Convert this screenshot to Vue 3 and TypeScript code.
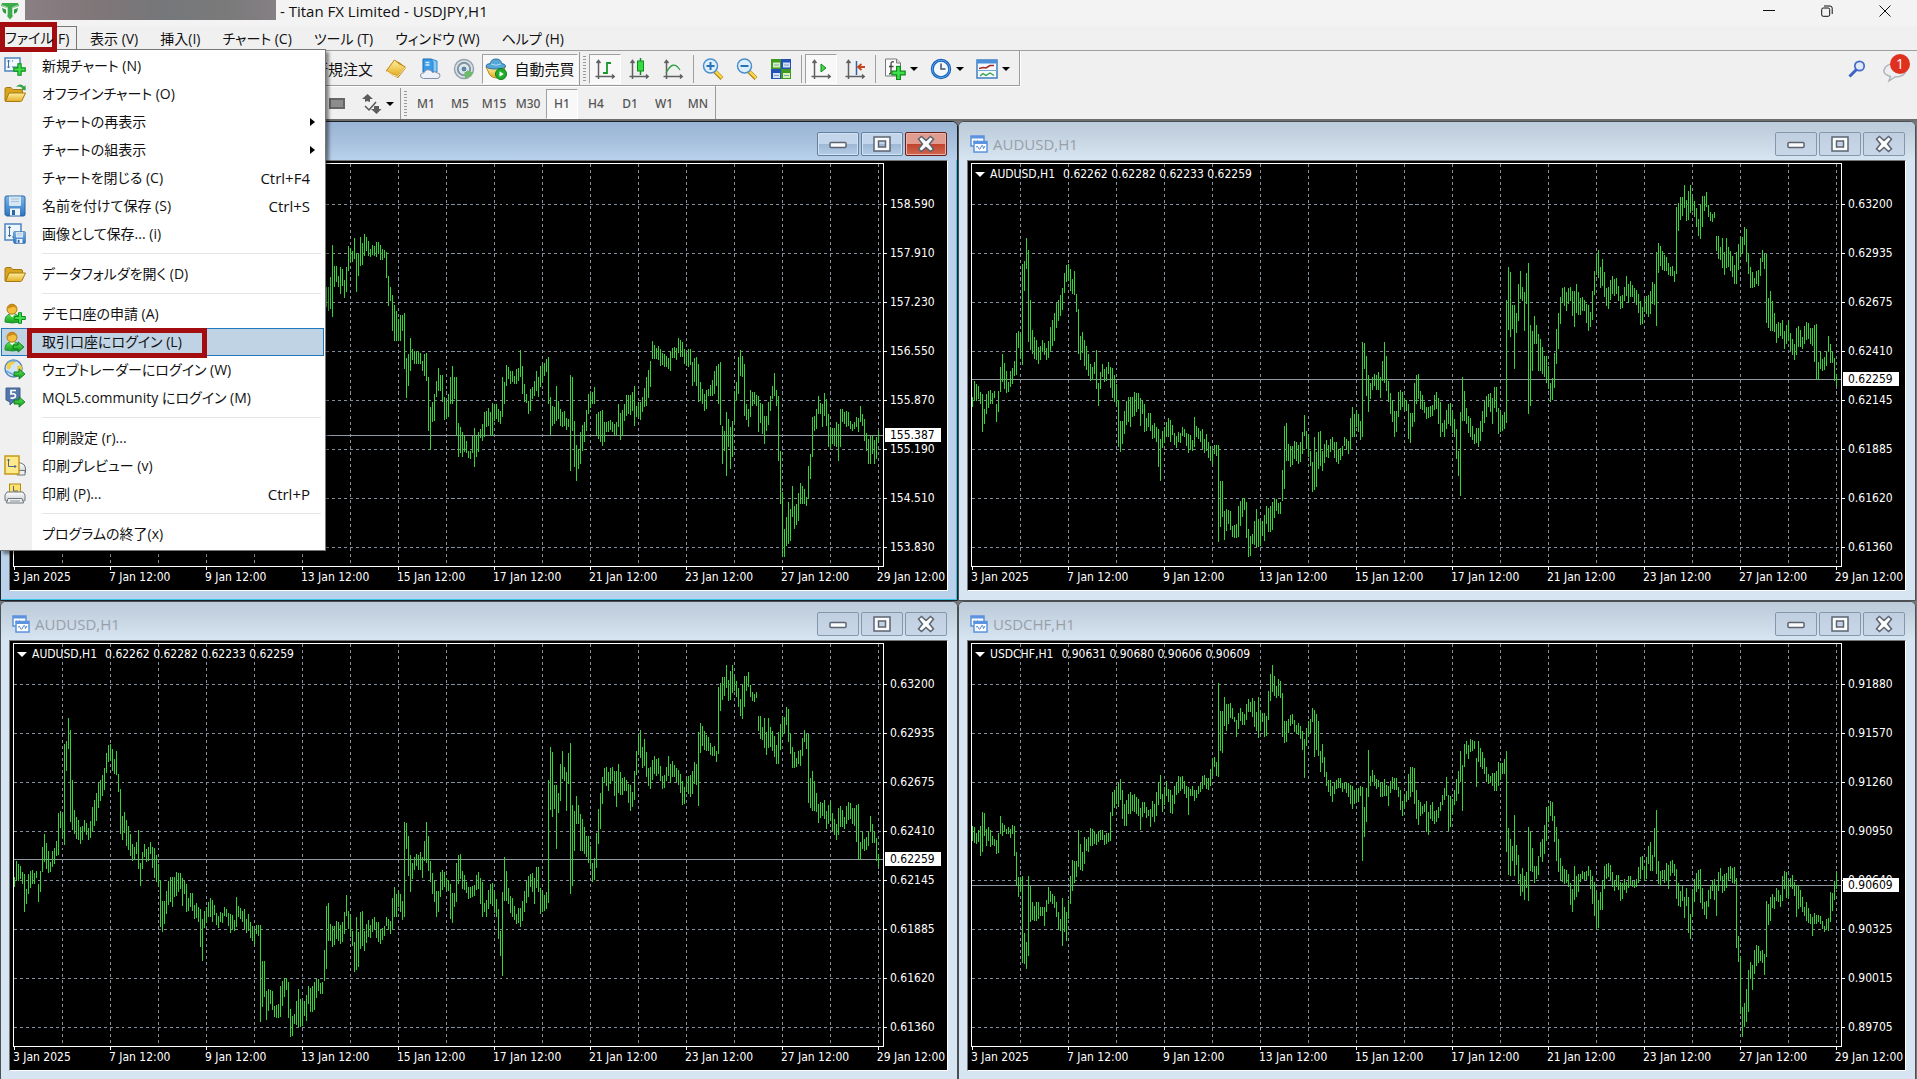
<script setup lang="ts">
interface Bar { x: number; hi: number; lo: number }
interface ChartWin {
  id: string
  title: string
  prices?: string
  labels: string[]
  bars: string
  level: number
  last: string
  active?: boolean
}
interface MenuEntry { label?: string; key?: string; icon?: string; sub?: boolean; hot?: boolean }

const TOP_ROW = 130
const LOWER_ROW = 145

/* Sampled highs and lows: "position high low", three steps to a pixel. */
const audFirst = '52 828 858,58 780 840,70 795 835,78 815 850,83 820 935,89 865 910,95 820 880,107 808 850,119 810 832,125 850 905,131 812 875,137 738 815,143 700 785,155 750 818,161 785 815,167 750 800,179 720 765,185 637 762,191 630 682,197 640 715,203 430 732,209 420 510,215 352 445,221 388 665,227 538 688,233 628 700,239 650 715,251 680 730,263 657 693,275 683 717,287 620 690,299 577 660,311 537 600,323 503 567,329 457 518,335 434 485,341 430 480,347 445 510,353 475 520,359 450 522,365 520 575,371 565 700,377 645 717,383 633 697,389 657 735,401 700 767,413 740 777,419 725 760,425 687 805,431 787 857,437 753 805,443 730 770,455 740 782,461 723 760,473 743 832,485 790 860,491 838 980,497 900 995,503 900 970,509 870 940,521 828 905,527 828 920,533 828 890,539 813 885,551 818 865,557 832 917,563 840 880,569 850 935,575 892 930,581 877 918,587 877 930,593 913 955,605 918 965,611 925 1038,617 955 1082,623 930 983,635 905 950,647 897 965,653 913 942,665 945 983,671 935 965,689 925 950,701 940 997,713 958 990,719 888 980,725 917 948,737 930 965,743 925 985,749 955 997,755 940 990,767 975 1020,773 988 1033,779 972 1000,785 972 1006,791 973 1265,797 1080 1220,803 1080 1188,809 1170 1257,821 1167 1210,827 1170 1228,833 1217 1250,845 1210 1252,851 1155 1250,863 1132 1190,869 1132 1167,875 1145 1252,881 1225 1310,887 1247 1307,893 1240 1270,905 1165 1280,911 1195 1280,917 1200 1277,923 1200 1245,929 1183 1262,935 1155 1210,941 1163 1235,953 1145 1228,965 1135 1170,977 1145 1180,983 1047 1140,989 917 1105,995 907 1020,1001 970 1022,1007 975 1040,1019 962 1015,1031 973 1030,1043 935 1000,1049 882 945,1055 930 985,1061 943 1008,1067 990 1035,1073 1025 1115,1079 948 1108,1085 993 1100,1091 935 1045,1097 930 1035,1103 990 1052,1115 957 1010,1121 973 1012,1133 948 985,1145 965 1025,1151 985 1030,1157 983 1018,1169 948 975,1181 960 1000,1187 893 985,1193 858 950,1199 880 950,1205 870 920,1217 900 957,1223 663 950,1229 667 745,1235 705 825,1241 763 875,1247 787 835,1259 760 795,1271 753 808,1277 768 833,1283 720 780,1289 663 787,1295 705 810,1301 780 845,1313 840 903,1319 870 950,1325 870 933,1331 813 890,1343 813 860,1355 838 870,1361 850 955,1367 877 968,1373 877 920,1379 787 905,1385 763 850,1391 760 835,1397 810 865,1409 843 877,1421 858 893,1433 853 887,1445 813 865'
const audSecond = '1 845 950,7 907 935,13 898 948,19 868 925,31 847 915,43 895 950,49 925 1015,55 990 1067,61 873 1125,67 768 900,73 810 900,79 863 910,91 893 948,103 940 970,115 923 980,127 870 935,139 825 890,145 820 858,157 832 910,163 798 862,169 798 875,175 863 940,187 883 930,193 873 925,199 538 908,205 438 628,211 453 648,217 553 625,223 553 745,229 577 638,235 490 600,241 450 535,247 500 540,253 515 632,259 458 550,265 427 880,271 612 857,277 630 750,283 585 670,289 612 670,295 640 752,307 680 760,313 705 770,319 705 788,325 735 805,331 788 845,337 773 837,343 697 803,349 625 730,355 577 685,361 528 610,367 503 548,373 498 557,379 513 572,391 500 540,403 510 618,409 490 578,421 533 583,433 537 572,445 553 630,451 573 620,457 510 597,463 450 522,469 402 460,475 388 472,481 438 502,487 415 495,493 453 530,499 502 555,505 500 565,517 465 520,529 472 520,541 525 565,553 500 540,559 465 525,565 490 548,577 492 530,589 508 552,601 542 613,607 560 610,613 533 575,625 522 590,637 483 550,643 490 552,649 395 617,655 367 458,661 375 435,673 403 452,691 440 467,703 450 485,709 258 460,715 247 332,721 228 297,727 228 285,733 192 263,739 237 300,745 210 297,751 192 277,757 230 270,769 262 320,775 295 347,781 250 355,787 225 318,793 225 270,799 213 260,805 252 290,811 275 300,817 280 305,823 273 293,829 345 392,835 345 415,841 378 418,847 352 443,853 395 462,859 352 443,865 378 438,877 407 468,883 433 490,889 393 490,901 345 408,907 350 397,913 318 372,919 325 425,925 397 460,931 438 503,943 472 500,955 447 497,961 413 465,967 387 425,973 400 445,979 400 608,985 533 623,991 512 630,1003 577 635,1009 610 668,1021 607 645,1027 597 655,1033 632 685,1045 600 662,1057 655 702,1063 670 718,1069 622 703,1075 615 680,1087 648 685,1093 615 670,1105 607 655,1117 622 675,1129 610 778,1135 725 775,1141 695 745,1147 715 750,1159 692 735,1165 645 695,1171 670 728,1177 693 728,1183 712 780,1189 760 800'
const jpyVisible = '16 500 560,21 500 572,25 470 565,30 373 588,34 437 500,40 437 485,44 465 500,49 440 520,54 445 495,58 478 532,63 438 515,68 375 452,72 383 425,77 390 425,82 352 415,87 397 513,92 400 465,96 348 437,101 367 432,106 340 405,111 348 390,115 362 405,120 385 410,130 375 405,134 365 410,139 363 400,144 373 418,150 388 413,155 393 410,158 393 473,163 465 557,168 500 540,172 522 632,177 553 660,182 570 662,186 595 660,191 582 660,196 583 630,201 577 745,205 713 832,210 700 797,215 653 750,220 685 718,225 690 730,235 693 730,243 720 750,248 700 767,253 698 780,258 770 930,262 860 988,267 845 905,271 820 900,277 780 830,281 743 810,286 763 810,291 763 845,296 830 898,301 842 895,305 820 890,310 770 850,315 735 850,320 770 835,324 770 945,329 908 1010,334 920 998,339 935 1008,343 947 995,348 960 997,353 990 1012,358 992 1015,362 945 997,367 922 1038,372 945 1010,376 935 995,382 925 953,391 875 950,396 870 920,401 862 915,406 875 945,411 847 945,415 853 900,420 850 895,425 865 905,430 870 910,434 770 890,439 783 850,444 732 795,448 740 775,453 750 790,462 765 790,467 745 790,472 742 780,477 687 770,481 735 820,486 790 845,491 820 848,496 840 880,501 805 870,506 798 835,511 770 825,515 750 810,520 770 830,525 735 800,530 727 765,535 715 755,543 710 850,548 830 942,553 855 917,558 860 910,563 797 900,567 840 895,572 865 915,577 875 920,582 870 917,587 895 920,592 888 995,596 763 1052,600 770 930,605 900 1040,610 972 1082,615 985 1045,620 935 1030,625 905 965,630 868 930,635 860 900,639 820 880,644 815 850,649 800 850,654 845 900,658 880 947,663 870 965,668 868 977,673 905 965,678 903 935,684 900 935,693 905 935,701 905 942,706 850 920,711 877 957,716 868 945,721 850 900,725 823 885,730 823 880,735 823 883,740 815 870,745 790 850,748 795 915,753 855 890,758 845 897,763 830 875,768 803 860,773 825 865,777 770 855,782 720 800,787 675 735,791 660 715,797 683 715,806 685 737,811 697 733,816 700 740,820 705 740,825 712 745,830 690 752,835 683 712,844 683 718,849 652 698,854 657 710,859 663 710,864 685 730,869 697 735,874 685 740,879 685 733,884 725 795,889 712 785,894 710 795,899 730 845,904 783 840,909 805 850,914 820 872,919 808 865,924 805 825,932 778 825,937 752 820,942 735 795,947 730 850,951 723 912,956 915 1030,961 930 990,966 873 1065,971 895 980,975 920 1045,980 900 1010,985 810 905,990 785 840,995 710 820,999 687 765,1004 707 770,1008 730 885,1013 850 897,1018 865 920,1023 808 890,1028 815 855,1032 813 850,1037 822 855,1042 825 935,1047 848 908,1051 850 940,1056 885 970,1061 887 930,1066 845 912,1071 825 870,1075 797 835,1080 758 825,1085 808 855,1089 825 1020,1094 990 1150,1099 1115 1308,1104 1225 1310,1109 1190 1275,1113 1145 1270,1118 1165 1260,1122 1097 1190,1127 1155 1225,1132 1150 1212,1137 1118 1200,1142 1088 1150,1147 1095 1150,1151 1105 1150,1156 1130 1155,1160 1035 1135,1165 1000 1075,1170 890 1010,1174 885 930,1179 865 925,1184 825 880,1189 848 880,1194 850 920,1199 818 885,1204 835 915,1209 880 978,1213 920 985,1218 922 970,1222 922 975,1227 905 980,1232 910 1022,1236 865 980,1241 865 905,1246 875 910,1251 872 920,1256 873 915,1261 900 925,1266 910 930,1271 905 925,1275 890 920,1280 893 935,1285 857 905,1290 880 915,1294 895 960,1299 937 990,1304 955 1030,1308 945 1030,1313 943 1000,1318 957 1030,1323 950 1015,1327 932 965'
const chfFirst = '52 690 735,58 693 743,64 712 745,70 703 738,76 690 780,82 648 770,88 652 720,94 700 750,100 693 735,106 703 755,112 720 748,118 730 752,124 733 775,130 712 773,136 660 715,142 682 722,148 687 710,154 700 715,166 700 728,172 687 715,178 690 782,184 768 870,190 843 905,196 845 888,202 840 1103,208 1013 1105,214 1040 1120,220 840 1080,226 870 980,232 920 973,238 930 977,244 920 975,250 918 970,256 933 962,262 933 962,268 935 990,274 912 948,280 873 925,286 885 918,292 895 925,298 900 938,304 920 963,310 948 1003,316 970 1007,322 907 1052,328 933 1010,334 948 1037,340 912 970,346 840 925,352 792 885,358 795 862,364 797 845,370 703 815,376 745 823,382 770 825,388 723 805,394 730 765,400 723 770,406 697 752,412 700 752,418 706 745,430 710 738,442 703 733,454 713 745,460 712 740,466 650 735,472 590 662,478 583 638,484 570 625,490 562 635,496 550 612,502 583 670,508 625 692,514 613 690,520 595 655,526 590 655,532 598 645,538 595 648,550 610 660,556 637 702,562 620 665,568 618 652,574 635 668,580 643 662,586 640 695,592 615 665,598 625 678,604 590 662,610 558 627,616 538 610,622 595 648,628 575 627,634 555 600,640 580 620,646 583 652,652 597 655,658 570 625,664 558 598,670 540 592,676 545 585,688 557 595,694 572 608,700 575 657,706 580 600,712 570 600,718 582 615,724 582 608,736 563 590,742 540 580,748 538 567,754 547 580,760 548 582,766 520 570,772 487 540,778 483 515,784 498 540,790 263 543,796 345 465,802 347 472,808 305 390,814 325 405,820 325 385,826 323 367,832 338 370,838 363 378,844 373 425,850 353 400,856 337 375,862 350 388,868 355 388,874 325 373,880 310 350,886 318 350,898 315 393,904 350 405,910 305 427,916 345 405,922 352 380,928 353 425,934 362 420,940 287 373,946 235 315,952 207 290,958 240 302,964 272 307,970 250 300,976 255 307,982 293 423,988 375 443,994 375 440,1000 370 412,1006 357 392,1012 355 385,1018 372 410,1024 387 415,1030 383 418,1036 390 430,1042 405 462,1048 430 548,1054 397 452,1060 375 423,1066 370 412,1072 337 380,1078 342 483,1084 355 462,1090 375 482,1096 465 530,1102 445 503,1108 485 545,1114 530 570,1120 553 588,1126 553 600,1132 570 618,1138 560 595,1144 553 580,1156 547 577,1168 560 580,1180 563 603,1186 567 625,1192 570 640,1198 582 625,1204 580 620,1210 578 620,1216 570 600,1222 573 795,1228 635 725,1234 577 680,1240 463 605,1246 540 572,1252 522 560,1258 537 572,1270 552 575,1276 562 603,1288 550 600,1294 567 600,1300 572 630,1306 555 592,1324 548 582,1330 573 605,1336 582 643,1342 615 662,1348 598 637,1354 587 618,1360 535 612,1366 515 605,1372 513 590,1378 517 625,1384 583 670,1390 612 687,1396 618 660,1402 630 655,1408 625 650,1414 617 708,1420 650 718,1426 627 670,1432 618 677,1438 645 685,1444 643 680'
const chfSecond = '1 618 645,7 597 628,13 577 612,19 543 600,25 597 705,31 600 695,37 610 655,43 583 627,49 550 615,55 525 595,61 465 560,67 507 645,73 445 515,79 437 475,85 448 490,91 430 470,103 437 460,109 487 573,115 437 500,127 470 520,139 515 560,151 540 560,163 532 587,169 525 585,175 498 570,187 503 535,193 490 535,199 465 768,205 697 837,211 730 840,217 750 797,223 657 840,229 747 808,235 778 865,241 835 900,247 817 890,253 840 912,259 828 878,265 693 917,271 710 825,277 758 830,283 810 862,289 812 850,295 780 838,301 740 783,307 730 800,319 633 735,325 630 678,331 615 662,337 620 675,343 660 740,349 693 795,355 730 830,361 788 853,367 810 860,379 823 862,385 835 875,391 862 927,397 880 950,403 810 912,409 840 905,415 835 888,421 835 860,433 830 853,445 812 840,457 840 925,463 858 960,469 890 1003,475 912 998,481 888 942,487 852 942,493 812 880,499 805 850,505 802 845,517 828 875,523 855 885,535 838 882,541 858 917,553 850 883,559 860 893,565 842 878,577 855 875,589 850 875,595 815 862,601 785 850,607 780 822,613 810 857,619 783 850,625 750 805,631 738 825,637 778 825,643 697 785,649 643 835,655 797 865,661 825 870,667 823 850,679 802 855,685 808 880,691 797 840,703 805 840,709 820 910,721 885 935,727 872 915,733 905 967,739 877 930,745 905 1013,751 955 1030,757 880 962,769 833 890,775 823 880,781 820 923,787 877 940,793 920 957,799 915 970,805 882 933,817 852 885,829 867 960,835 830 885,841 817 855,847 840 893,859 832 877,871 812 850,883 815 865,889 847 1057,895 1020 1098,901 1080 1255,907 1235 1325,913 1223 1295,919 1180 1278,925 1122 1248,931 1098 1150,937 1107 1182,943 1062 1135,955 1050 1103,961 1065 1095,967 1063 1103,973 1075 1138,979 915 1083,985 925 987,991 905 975,997 895 938,1003 903 940,1009 877 915,1021 898 935,1027 840 917,1033 825 880,1039 828 907,1045 855 905,1051 847 875,1057 837 880,1063 860 900,1069 872 965,1081 883 935,1087 903 950,1093 935 960,1099 918 977,1111 955 985,1117 965 1020,1123 952 985,1135 957 980,1147 975 1000,1153 992 1010,1165 968 1007,1171 890 980,1177 892 945,1183 857 912,1189 830 880'

function sample(raw: string, origin: number, pitch: number, top: number): Bar[] {
  return raw.split(',').map((s) => {
    const [x, hi, lo] = s.split(' ').map(Number)
    return { x: Math.round((x - origin) / pitch), hi: (hi - top) / 3, lo: (lo - top) / 3 }
  })
}

/* Fills the bars between samples and returns one path of vertical strokes. */
function barPath(samples: Bar[]): string {
  const out: string[] = []
  samples.forEach((a, i) => {
    const b = samples[i + 1]
    const span = b ? Math.max(b.x - a.x, 0) : 1
    for (let k = 0; k < span; k++) {
      const t = k / span
      const n = a.x + k
      const wobble = k === 0 ? 0 : ((n * 37) % 7) - 3
      const hi = b ? a.hi + (b.hi - a.hi) * t : a.hi
      const lo = b ? a.lo + (b.lo - a.lo) * t : a.lo
      out.push(`M${n * 2 + 1} ${Math.round(hi + wobble)}V${Math.round(lo + wobble)}`)
    }
  })
  return out.join('')
}

const aud = barPath([...sample(audFirst, 52, 6, TOP_ROW), ...sample(audSecond, -1404, 6, TOP_ROW)])
const jpy = barPath(sample(jpyVisible, -727, 4.752, TOP_ROW))
const chf = barPath([...sample(chfFirst, 52, 6, LOWER_ROW), ...sample(chfSecond, -1404, 6, LOWER_ROW)])

const audLabels = ['0.63200', '0.62935', '0.62675', '0.62410', '0.62145', '0.61885', '0.61620', '0.61360']
const charts: ChartWin[] = [
  { id: 'a', title: 'USDJPY,H1', labels: ['158.590', '157.910', '157.230', '156.550', '155.870', '155.190', '154.510', '153.830'], bars: jpy, level: 272, last: '155.387', active: true },
  { id: 'b', title: 'AUDUSD,H1', prices: '0.62262 0.62282 0.62233 0.62259', labels: audLabels, bars: aud, level: 216, last: '0.62259' },
  { id: 'c', title: 'AUDUSD,H1', prices: '0.62262 0.62282 0.62233 0.62259', labels: audLabels, bars: aud, level: 216, last: '0.62259' },
  { id: 'd', title: 'USDCHF,H1', prices: '0.90631 0.90680 0.90606 0.90609', labels: ['0.91880', '0.91570', '0.91260', '0.90950', '0.90640', '0.90325', '0.90015', '0.89705'], bars: chf, level: 242, last: '0.90609' },
]
const dates = ['3 Jan 2025', '7 Jan 12:00', '9 Jan 12:00', '13 Jan 12:00', '15 Jan 12:00', '17 Jan 12:00', '21 Jan 12:00', '23 Jan 12:00', '27 Jan 12:00', '29 Jan 12:00']

const gridRows = Array.from({ length: 8 }, (_, i) => `M0 ${41 + 49 * i}H870`).join('')
const gridCols = Array.from({ length: 18 }, (_, i) => `M${49 + 48 * i} 0V403`).join('')

const fileMenu: MenuEntry[] = [
  { label: '新規チャート (N)', icon: 'newchart' },
  { label: 'オフラインチャート (O)', icon: 'offline' },
  { label: 'チャートの再表示', sub: true },
  { label: 'チャートの組表示', sub: true },
  { label: 'チャートを閉じる (C)', key: 'Ctrl+F4' },
  { label: '名前を付けて保存 (S)', key: 'Ctrl+S', icon: 'save' },
  { label: '画像として保存... (i)', icon: 'savepic' },
  {},
  { label: 'データフォルダを開く (D)', icon: 'folder' },
  {},
  { label: 'デモ口座の申請 (A)', icon: 'useradd' },
  { label: '取引口座にログイン (L)', icon: 'userlogin', hot: true },
  { label: 'ウェブトレーダーにログイン (W)', icon: 'web' },
  { label: 'MQL5.community にログイン (M)', icon: 'mql' },
  {},
  { label: '印刷設定 (r)...' },
  { label: '印刷プレビュー (v)', icon: 'preview' },
  { label: '印刷 (P)...', key: 'Ctrl+P', icon: 'print' },
  {},
  { label: 'プログラムの終了(x)' },
]
const menus = ['表示 (V)', '挿入(I)', 'チャート (C)', 'ツール (T)', 'ウィンドウ (W)', 'ヘルプ (H)']
const frames = ['M1', 'M5', 'M15', 'M30', 'H1', 'H4', 'D1', 'W1', 'MN']
</script>

<template>
  <div class="app">
    <svg class="defs" aria-hidden="true">
      <defs>
        <linearGradient id="gold" x1="0" y1="0" x2="0" y2="1"><stop offset="0" stop-color="#fff0a0" /><stop offset="1" stop-color="#e3ad22" /></linearGradient>
        <linearGradient id="blue" x1="0" y1="0" x2="0" y2="1"><stop offset="0" stop-color="#7cb8ee" /><stop offset="1" stop-color="#2f74bd" /></linearGradient>
        <linearGradient id="leaf" x1="0" y1="0" x2="0" y2="1"><stop offset="0" stop-color="#5fe05a" /><stop offset="1" stop-color="#12a01a" /></linearGradient>
        <linearGradient id="steel" x1="0" y1="0" x2="0" y2="1"><stop offset="0" stop-color="#ffffff" /><stop offset="1" stop-color="#c9cfd6" /></linearGradient>
        <symbol id="plus" viewBox="0 0 12 12"><path d="M4.500 .7h3v3.800h3.800v3H7.500v3.800h-3V7.500H.7v-3h3.800z" fill="#3fe04a" stroke="#0d8a1b" /></symbol>
        <symbol id="arrow" viewBox="0 0 12 12"><path d="M.6 4h5V.9L11.400 6l-5.800 5.100V8h-5z" fill="url(#leaf)" stroke="#0b7a18" /></symbol>
        <symbol id="newchart" viewBox="0 0 22 22"><rect x="1" y="3" width="15" height="13" fill="#f2f8fe" stroke="#4c84bd" stroke-width="1.500" /><path d="M4.500 5v8M3.200 6.500l1.300-1.500 1.300 1.500M3.200 11.500l1.300 1.500 1.300-1.500M8 12h6M8 6h1" stroke="#3d6f9f" fill="none" /><use href="#plus" x="9" y="8" width="13" height="13" /></symbol>
        <symbol id="folder" viewBox="0 0 22 22"><path d="M1 18V6q0-1.500 1.500-1.500h4.500l1.800 2H17q1.500 0 1.500 1.500v3" fill="#d9a520" stroke="#a67811" /><path d="M1.500 18.500L5 10h16.500l-3.500 7.500q-.5 1-1.500 1z" fill="url(#gold)" stroke="#a67811" /></symbol>
        <symbol id="offline" viewBox="0 0 22 22"><use href="#folder" width="22" height="22" /><path d="M12 4q4-4.500 8-.5l1.500-1.300.3 5-5-.5 1.700-1.600q-3-2.500-6.500-1.100z" fill="#38a34a" /></symbol>
        <symbol id="save" viewBox="0 0 22 22"><path d="M1 2.500Q1 1 2.500 1h17Q21 1 21 2.500v17q0 1.500-1.500 1.500h-17L1 19.500z" fill="url(#blue)" stroke="#28629f" /><path d="M5 1.500h12v8.500q0 1-1 1H6q-1 0-1-1z" fill="#d7e6f5" /><path d="M7 4h8M7 6.500h8" stroke="#a9bfd4" /><rect x="6" y="13.500" width="10" height="7" fill="#eef4fa" /><rect x="8" y="15" width="3" height="5" fill="#2a65a5" /></symbol>
        <symbol id="savepic" viewBox="0 0 22 22"><rect x="1" y="1" width="16" height="16" fill="#eef6fd" stroke="#4c84bd" stroke-width="1.500" /><path d="M5.500 3.500v10M4 5l1.500-1.700L7 5M4 12l1.500 1.700L7 12M8 14h4" stroke="#3d6f9f" fill="none" /><use href="#save" x="9" y="8" width="13" height="13" /></symbol>
        <symbol id="user" viewBox="0 0 22 22"><path d="M1 19q-.5-6.500 5-8h5q5 1.500 4.500 8-7 2-14.500 0z" fill="url(#leaf)" stroke="#26903a" /><path d="M5.500 11l2.700 3.500L11 11z" fill="#fff" /><circle cx="8" cy="6.200" r="5" fill="#f4be3e" stroke="#b57a12" /><path d="M3.500 5.500Q4 1.500 8 1.500t4.700 4Q10 3 8 4T3.500 5.500z" fill="#c98a16" /></symbol>
        <symbol id="useradd" viewBox="0 0 22 22"><use href="#user" width="22" height="22" /><use href="#plus" x="10" y="9" width="12" height="12" /></symbol>
        <symbol id="userlogin" viewBox="0 0 22 22"><use href="#user" width="22" height="22" /><use href="#arrow" x="8" y="10" width="13" height="12" /></symbol>
        <symbol id="web" viewBox="0 0 22 22"><circle cx="9.500" cy="9.500" r="8.500" fill="#cfe6fa" stroke="#5a87b8" stroke-width="1.500" /><path d="M3 5q4-5 9-3l-2 3-3 1v3l-3 2q-2-2-1-6zM13 7l4-1q2 4-.5 7l-3-1z" fill="#f1cf49" /><path d="M4 3q4-2 8-1M2 12q5 2 9 5" stroke="#6fa5db" stroke-width="1.500" fill="none" /><use href="#arrow" x="9" y="9" width="13" height="12" /></symbol>
        <symbol id="mql" viewBox="0 0 22 22"><path d="M2 1h14v14H9l-3 3v-3l-4-2z" fill="#5576a8" stroke="#41608f" /><path d="M12 3.500H7v3.500q4.500-1 4.500 1.800T6.500 11" stroke="#fff" stroke-width="1.700" fill="none" /><use href="#arrow" x="9" y="9" width="13" height="12" /></symbol>
        <symbol id="printer" viewBox="0 0 22 22"><path d="M3 9h16l2 3v5q0 1-1 1H2q-1 0-1-1v-5z" fill="url(#steel)" stroke="#71767c" /><path d="M4 15.500h14l1.500 4.500h-17z" fill="#eceff2" stroke="#71767c" /><path d="M6 18h10" stroke="#8c9196" /></symbol>
        <symbol id="print" viewBox="0 0 22 22"><rect x="5.500" y="1" width="11" height="10" fill="#ffe26b" stroke="#b38c14" /><path d="M9.500 3v5H14" stroke="#4b6888" fill="none" /><use href="#printer" width="22" height="22" /></symbol>
        <symbol id="preview" viewBox="0 0 22 22"><path d="M14 8h3q4 1 4.500 5v4.500H14z" fill="url(#steel)" stroke="#71767c" /><path d="M13 15.500h8v4.500h-8z" fill="#eceff2" stroke="#71767c" /><rect x="1" y="1" width="14" height="18" fill="#ffe98a" stroke="#c39a1c" stroke-width="1.500" /><path d="M4.500 4v7.500H12M3.200 5.500L4.500 4l1.300 1.500M10.500 10l1.500 1.500-1.500 1.500" stroke="#4b6888" fill="none" /></symbol>
        <symbol id="book" viewBox="0 0 22 22"><path d="M1 13L9 2q5 1 12 8l-8 10Q7 18 1 13z" fill="#b97e12" /><path d="M1.500 12.500L9.500 2Q13 6 20.500 9l-8 9Q6 16 1.500 12.500z" fill="url(#gold)" stroke="#c88d18" /><path d="M2 13.500q5 4 10.500 5l8-9" stroke="#fff3c4" fill="none" /></symbol>
        <symbol id="cloud" viewBox="0 0 22 22"><path d="M4 1h8l3 3v10H4z" fill="#3a9ae6" stroke="#1d6cb4" /><path d="M12 1l6 2v11h-4V4z" fill="#8acbf6" stroke="#2f86cd" /><path d="M6.500 4.500h4M6.500 7h4" stroke="#d9efff" stroke-width="1.500" /><path d="M4.500 20.500q-3.500-.5-3-3.500.6-2.500 3.500-2.200Q6.500 11 10.500 12q2.500.5 3 2.500 2-1.500 4.500.3 3.500.2 3 3.200-.5 2.500-3 2.500z" fill="#eef1f7" stroke="#8390ab" /></symbol>
        <symbol id="signal" viewBox="0 0 22 22"><circle cx="11" cy="11" r="9.500" fill="#dfe5e9" stroke="#93a2ac" stroke-width="1.500" /><circle cx="11" cy="11" r="6.200" fill="none" stroke="#7d95a3" stroke-width="2" /><path d="M11 11l1 9.500q6-1 8-6z" fill="#6dbb68" /><circle cx="11" cy="11" r="3" fill="#6186a5" stroke="#e5edf2" /></symbol>
        <symbol id="auto" viewBox="0 0 22 22"><path d="M1 9h19q-1 8-8 11Q5 20 3 13z" fill="url(#gold)" stroke="#b98718" /><path d="M5.500 5.500Q6 1 11 1t5.500 4.500q4 .5 4 2.500 0 3-9.500 3T1 8q0-2 4.500-2.500z" fill="#56a8d8" stroke="#2c6f9e" /><path d="M6 6q5 2.500 10 0" stroke="#aedcf4" fill="none" /><circle cx="16" cy="16" r="5.500" fill="#1fae2c" stroke="#0d7f19" /><path d="M14.500 13.200v5.600l4.200-2.800z" fill="#fff" /></symbol>
        <symbol id="axes" viewBox="0 0 22 22"><path d="M4.500 3v18M1.500 18.500H20M2.500 5l2-2.500 2 2.500M18 16.500l2.200 2-2.200 2" stroke="#5f6062" stroke-width="1.500" fill="none" /></symbol>
        <symbol id="bars" viewBox="0 0 22 22"><use href="#axes" /><path d="M13 4v12M13 5h4M9 15h4" stroke="#159a2a" stroke-width="1.800" /></symbol>
        <symbol id="candle" viewBox="0 0 22 22"><use href="#axes" /><path d="M12.500 0v17" stroke="#128a20" stroke-width="1.500" /><rect x="9.500" y="3" width="6" height="10" fill="#35dc3f" stroke="#128a20" /></symbol>
        <symbol id="linechart" viewBox="0 0 22 22"><use href="#axes" /><path d="M4 15q7-14 14-3" stroke="#2d9e3e" stroke-width="1.300" fill="none" /></symbol>
        <symbol id="lens" viewBox="0 0 22 22"><path d="M13 13.500l7 7" stroke="#a87c13" stroke-width="4" /><path d="M13.500 13.500l6.500 6.500" stroke="#f7d545" stroke-width="2.500" /><circle cx="8.500" cy="8" r="7" fill="#dceffd" stroke="#4f8fca" stroke-width="1.500" /></symbol>
        <symbol id="zoomin" viewBox="0 0 22 22"><use href="#lens" /><path d="M4.500 8h8M8.500 4v8" stroke="#2b72b5" stroke-width="2" /></symbol>
        <symbol id="zoomout" viewBox="0 0 22 22"><use href="#lens" /><path d="M4.500 8h8" stroke="#2b72b5" stroke-width="2" /></symbol>
        <symbol id="tiles" viewBox="0 0 22 22"><path d="M1 1h10v10H1zM11 11h10v10H11z" fill="#3f9a1f" /><path d="M11 1h10v10H11zM1 11h10v10H1z" fill="#2450b8" /><path d="M3 4.500h7v5H3zM13 15h7v5h-7z" fill="#d5f2bd" /><path d="M13 4.500h7v5h-7zM3 15h7v5H3z" fill="#d3e2fb" /><path d="M4 7h5M14 7h5M4 17.500h5M14 17.500h5" stroke="#8ba3b5" /></symbol>
        <symbol id="scroll" viewBox="0 0 22 22"><use href="#axes" /><path d="M11 6v8l5-4z" fill="#43d84b" stroke="#128a20" /></symbol>
        <symbol id="shift" viewBox="0 0 22 22"><use href="#axes" /><path d="M12.500 3v14" stroke="#2b66a8" stroke-width="1.500" /><path d="M21 9h-6M17.500 6l-3.500 3 3.500 3" stroke="#c8441c" stroke-width="1.800" fill="none" /></symbol>
        <symbol id="indic" viewBox="0 0 22 22"><path d="M1.500 1h11l4 4v13h-15z" fill="#fafafa" stroke="#77797c" /><path d="M12.500 1v4h4" fill="#ddd" stroke="#77797c" /><path d="M10 4q-3-1-3 2v8q0 2-2 2M5 8.500h4.500" stroke="#444" stroke-width="1.300" fill="none" /><use href="#plus" x="7" y="7.500" width="15" height="15" /></symbol>
        <symbol id="clock" viewBox="0 0 22 22"><circle cx="11" cy="11" r="8.700" fill="#f2f7fc" stroke="#1660b8" stroke-width="3" /><circle cx="11" cy="11" r="8.700" fill="none" stroke="#5aa5ee" /><path d="M11 5.500V11h4.500" stroke="#456" stroke-width="1.500" fill="none" /></symbol>
        <symbol id="template" viewBox="0 0 22 22"><rect x="1" y="2" width="20" height="18" fill="#f5faff" stroke="#3f7ec1" stroke-width="1.500" /><path d="M1 2h20v3.500H1z" fill="#4b90d8" /><path d="M1 12.500h20" stroke="#79a8d6" /><path d="M3 10.500l4-1 3 .5 4-2.500h4" stroke="#a82a20" stroke-width="1.500" fill="none" /><path d="M4 18l3-2.500 3 2 4-2.500 4 2.500" stroke="#2fa03c" stroke-width="1.300" fill="none" /></symbol>
        <symbol id="objects" viewBox="0 0 22 22"><path d="M2 6h11L7.500 1zM5 6h5v3l-3-1-2 1zM11 16h10.500L16.500 21zM14 13h5v3h-5z" fill="#5c5c5c" /><path d="M5 13l4 4 7-8" stroke="#555" stroke-width="1.500" fill="none" /></symbol>
        <symbol id="docicon" viewBox="0 0 18 18"><rect x="1" y="1" width="13" height="10" fill="#fff" stroke="#5b93de" stroke-width="1.500" /><path d="M1 1h13v2.500H1z" fill="#5b93de" /><path d="M3 7l1.500-1L6 7l2-1.500" stroke="#4a83d0" fill="none" /><rect x="4" y="6.500" width="13" height="10.500" fill="#fff" stroke="#5b93de" stroke-width="1.500" /><path d="M4 6.500h13v2.500H4z" fill="#5b93de" /><path d="M6 12q1.500-2 2.500 1t2.500-1 2.500 1.500L15 11" stroke="#4a83d0" fill="none" /></symbol>
      </defs>
    </svg>

    <header class="titlebar">
      <svg class="logo" viewBox="0 0 18 18"><path d="M1 1h16l1 3-6 2v8l-3 3.500L6 14V6L0 4z" fill="#3cab4c" /><path d="M1 6l4 1.500V12L2 10zM17 6l-4 1.500V12l3-2z" fill="#2f9a43" /><path d="M1 3.500L6.500 5.500v8M17 3.500l-5.500 2v8" fill="none" stroke="#eaf7ee" stroke-width=".7" /></svg>
      <div class="masked"></div>
      <h1>- Titan FX Limited - USDJPY,H1</h1>
      <div class="sysbtns">
        <button type="button" aria-label="Minimize"><svg viewBox="0 0 12 12"><path d="M0 5.500h12" /></svg></button>
        <button type="button" aria-label="Restore"><svg viewBox="0 0 12 12"><rect x=".7" y="3" width="8" height="8.300" rx="1.500" /><path d="M3 1h6q2.200 0 2.200 2.200V9" /></svg></button>
        <button type="button" aria-label="Close"><svg viewBox="0 0 12 12"><path d="M.5.5l11 11M11.500.5l-11 11" /></svg></button>
      </div>
    </header>

    <nav class="menubar">
      <button type="button" class="open"><span class="frame-mark">ファイル</span><span>F)</span></button>
      <button v-for="m in menus" :key="m" type="button">{{ m }}</button>
      <ul class="dropdown">
        <li v-for="(e, i) in fileMenu" :key="i" :class="{ sep: !e.label, hot: e.hot }">
          <button v-if="e.label" type="button">
            <span class="ico"><svg v-if="e.icon" viewBox="0 0 22 22"><use :href="'#' + e.icon" /></svg></span>
            <span class="lbl">{{ e.label }}</span>
            <span v-if="e.key" class="key">{{ e.key }}</span>
            <svg v-if="e.sub" class="sub" viewBox="0 0 5 8"><path d="M0 0l5 4-5 4z" /></svg>
          </button>
        </li>
      </ul>
    </nav>

    <div class="tools">
      <div class="bar first">
        <button type="button" class="tb text">新規注文</button>
        <button type="button" class="tb" aria-label="Market"><svg><use href="#book" /></svg></button>
        <button type="button" class="tb" aria-label="Cloud"><svg><use href="#cloud" /></svg></button>
        <button type="button" class="tb" aria-label="Signals"><svg><use href="#signal" /></svg></button>
        <button type="button" class="tb auto on"><svg><use href="#auto" /></svg>自動売買</button>
        <i class="end"></i><i class="grip"></i>
        <button type="button" class="tb on" aria-label="Bar chart"><svg><use href="#bars" /></svg></button>
        <button type="button" class="tb" aria-label="Candlesticks"><svg><use href="#candle" /></svg></button>
        <button type="button" class="tb" aria-label="Line chart"><svg><use href="#linechart" /></svg></button>
        <i class="line"></i>
        <button type="button" class="tb" aria-label="Zoom in"><svg><use href="#zoomin" /></svg></button>
        <button type="button" class="tb" aria-label="Zoom out"><svg><use href="#zoomout" /></svg></button>
        <button type="button" class="tb" aria-label="Tile windows"><svg><use href="#tiles" /></svg></button>
        <i class="line"></i>
        <button type="button" class="tb on" aria-label="Auto scroll"><svg><use href="#scroll" /></svg></button>
        <button type="button" class="tb" aria-label="Chart shift"><svg><use href="#shift" /></svg></button>
        <i class="line"></i>
        <button type="button" class="tb drop" aria-label="Indicators"><svg><use href="#indic" /></svg><b></b></button>
        <button type="button" class="tb drop" aria-label="Periods"><svg><use href="#clock" /></svg><b></b></button>
        <button type="button" class="tb drop" aria-label="Templates"><svg><use href="#template" /></svg><b></b></button>
      </div>
      <div class="bar second">
        <button type="button" class="tb" aria-label="Rectangle"><span class="rect"></span></button>
        <button type="button" class="tb drop" aria-label="Objects"><svg><use href="#objects" /></svg><b></b></button>
        <i class="end"></i><i class="grip"></i>
        <button v-for="f in frames" :key="f" type="button" class="tb tf" :class="{ on: f === 'H1' }">{{ f }}</button>
      </div>
      <div class="status">
        <button type="button" aria-label="Search"><svg width="18" height="18" viewBox="0 0 18 18"><path d="M9 9l-7.500 7.500" stroke="#3b62c4" stroke-width="3" /><circle cx="11.500" cy="6" r="4.700" fill="#dfe9fb" stroke="#4169c9" stroke-width="1.700" /></svg></button>
        <button type="button" class="chat" aria-label="Messages"><svg width="26" height="20" viewBox="0 0 26 20"><path d="M10 1h8q6 2 5 7-2 6-11 6l-6 4 1.500-4.500Q0 11 1 7q2-6 9-6z" fill="#eceef2" stroke="#b0b3ba" stroke-width="1.500" /></svg><span class="badge">1</span></button>
      </div>
    </div>

    <main class="mdi">
      <section v-for="c in charts" :key="c.id" class="win" :class="{ active: c.active }">
        <header>
          <svg class="doc"><use href="#docicon" /></svg>
          <h2>{{ c.title }}</h2>
          <div class="wbtns">
            <button type="button" aria-label="Minimize"><svg width="18" height="18" viewBox="0 0 18 18"><rect x="1" y="7.500" width="16" height="5" rx="1" /></svg></button>
            <button type="button" aria-label="Maximize"><svg width="18" height="18" viewBox="0 0 18 18"><path fill-rule="evenodd" d="M1 2h16v14H1zM5.500 6v6h7V6z" /></svg></button>
            <button type="button" class="x" aria-label="Close"><svg width="18" height="18" viewBox="0 0 18 18"><path d="M1.500 4L4.500 1.500 9 5.500l4.500-4 3 2.500-4 5 4 5-3 2.500-4.500-4-4.500 4-3-2.500 4-5z" /></svg></button>
          </div>
        </header>
        <div class="client">
          <div class="plotwrap">
            <svg class="plot" viewBox="0 0 871 404" preserveAspectRatio="none" shape-rendering="crispEdges">
              <g transform="translate(.5 .5)">
                <path :d="gridRows + gridCols" class="grid" />
                <path :d="`M0 ${c.level}H870`" class="level" />
                <path :d="c.bars" class="bars" />
                <path d="M0 0H870V403H0z" class="frame" />
              </g>
            </svg>
            <p v-if="c.prices" class="quote"><i></i><span>{{ c.title }}</span><span>{{ c.prices }}</span></p>
          </div>
          <div class="scale">
            <ul><li v-for="l in c.labels" :key="l">{{ l }}</li></ul>
            <output :style="{ top: c.level - 7 + 'px' }">{{ c.last }}</output>
          </div>
          <ul class="dates"><li v-for="d in dates" :key="d">{{ d }}</li></ul>
        </div>
      </section>
    </main>
  </div>
</template>

<style>
html, body { margin: 0; background: #f0f0f0; }
</style>

<style scoped>
.app {
  height: 100vh;
  overflow: hidden;
  display: flex;
  flex-direction: column;
  background: #f0f0f0;
  color: #111;
  font: 15px/20px "Open Sans", "Noto Sans CJK JP", sans-serif;
  font-feature-settings: "palt";
}
button { font: inherit; color: inherit; font-feature-settings: inherit; background: none; border: 0; padding: 0; margin: 0; white-space: nowrap; }
ul { list-style: none; margin: 0; padding: 0; }
.defs { position: absolute; width: 0; height: 0; }

.titlebar { display: flex; align-items: center; flex: none; height: 26px; background: #f3f3f3; }
.logo { width: 18px; height: 18px; margin: 0 6px 4px 1px; }
.masked { width: 251px; height: 20px; align-self: flex-start; background: linear-gradient(90deg, #8a7f83, #7f7678 30%, #75777a 55%, #7a7a7a 80%, #858084); }
h1 { flex: 1; margin: 0 0 4px 4px; font-size: 15px; font-weight: 400; line-height: 22px; }
.sysbtns { display: flex; padding: 0 3px 4px 0; }
.sysbtns button { width: 58px; height: 22px; display: grid; place-items: center; }
.sysbtns svg { width: 12px; height: 12px; fill: none; stroke: #111; overflow: visible; }

.menubar { position: relative; z-index: 5; display: flex; flex: none; height: 25px; border-bottom: 1px solid #9d9d9d; box-sizing: border-box; font-size: 14px; }
.menubar > button { padding: 0 11px; line-height: 23px; }
.menubar > button.open { width: 77px; margin-right: 2px; padding: 0; display: flex; box-sizing: border-box; border: solid #777; border-width: 1px 1px 0 0; z-index: 2; }
.frame-mark { box-sizing: border-box; flex: none; width: 57px; height: 30px; margin: -5px 1px 0 0; line-height: 21px; border: 5px solid #a30d10; text-align: center; background: #f0f0f0; }

.dropdown { position: absolute; left: 0; top: 23px; width: 326px; box-sizing: border-box; padding: 2px 0; border: solid #777; border-width: 1px 1px 1px 0; background: linear-gradient(90deg, #f0f0f0 32px, #fff 32px); box-shadow: 3px 3px 3px rgba(0, 0, 0, .45); }
.dropdown li { height: 28px; position: relative; }
.dropdown li button { width: 100%; height: 28px; display: flex; align-items: center; box-sizing: border-box; padding-right: 15px; text-align: left; }
.dropdown .ico { width: 32px; padding-left: 4px; box-sizing: border-box; margin-right: 10px; height: 22px; }
.ico svg { width: 22px; height: 22px; display: block; }
.lbl { flex: 1; }
.key { font-size: 15px; }
.sub { width: 5px; height: 8px; margin-right: -5px; }
.dropdown li.sep { height: 12px; }
.dropdown li.sep::before { content: ""; position: absolute; left: 42px; right: 4px; top: 5px; border-top: 1px solid #e6e6e6; }
.dropdown li.hot::before { content: ""; position: absolute; inset: 0 1px 0 1px; background: #bfd3e4; border: 1px solid #1f78bd; }
.dropdown li.hot::after { content: ""; position: absolute; left: 27px; top: 0; width: 170px; height: 20px; border: 5px solid #a30d10; }
.dropdown li.hot button { position: relative; }

.tools { position: relative; flex: none; height: 70px; box-sizing: border-box; border-bottom: 2px solid #6d6d6d; display: grid; grid-template: 35px 33px / max-content 1fr; }
.bar { grid-column: 1; justify-self: start; display: flex; align-items: center; height: 100%; box-sizing: border-box; border-right: 1px solid #9a9a9a; }
.bar.first { padding: 1px 3px 0 311px; border-bottom: 1px solid #9a9a9a; box-shadow: 0 1px 0 #fff, 1px 0 0 #fff; }
.bar.second { padding: 2px 0 0 320px; }
.tb { width: 34px; height: 30px; display: flex; align-items: center; justify-content: center; flex: none; }
.tb svg { width: 22px; height: 22px; }
.tb.text { width: 68px; justify-content: flex-end; padding-right: 6px; box-sizing: border-box; }
.tb.on { width: 32px; margin: 0 1px; box-sizing: border-box; background: #f8f8f8; border: 1px solid; border-color: #a0a0a0 #fff #fff #a0a0a0; }
.tb.auto { width: 96px; gap: 7px; }
.tb.drop { width: 46px; gap: 4px; }
.tb b { border: 4px solid transparent; border-top-color: #000; border-bottom: 0; }
.end { width: 1px; height: 100%; background: #9a9a9a; margin: 0 3px 0 0; }
.grip { width: 3px; height: 26px; margin-right: 2px; background: repeating-linear-gradient(#9a9a9a 0 1px, transparent 1px 3px); }
.line { width: 1px; height: 28px; margin: 0 2px 0 3px; background: #a0a0a0; }
.rect { width: 16px; height: 11px; box-sizing: border-box; border: 2px solid #666; background: #8d8d8d; }
.tf { font: 500 12px/16px "Noto Sans", sans-serif; color: #555; }
.status { grid-column: 2; grid-row: 1; justify-self: end; display: flex; align-items: center; gap: 17px; padding-right: 8px; }
.status svg { display: block; }
.chat { position: relative; }
.chat svg { margin-top: 8px; }
.badge { position: absolute; right: -1px; top: -1px; width: 20px; height: 20px; border-radius: 50%; background: #e0301e; color: #fff; font-size: 14px; line-height: 20px; text-align: center; }

.mdi { flex: 1 0 auto; display: grid; grid-template-columns: 1fr 1fr; align-content: start; padding-right: 1px; background: #777; }
.win { box-sizing: border-box; min-width: 0; padding: 0 9px 9px 8px; border: 1px solid #4a4f54; border-radius: 6px 6px 0 0; background: #d7e4f1; }
.win > header { display: flex; align-items: center; box-sizing: border-box; height: 38px; margin: 0 -9px 0 -8px; padding: 6px 10px 0 11px; border-radius: 5px 5px 0 0; background: linear-gradient(#bccbda, #c9d6e3 50%, #d7e4f1); color: #97a0a9; }
.win.active { border-color: #1b2026; background: #b9d1ea; box-shadow: inset -1px -1px 0 #35c4e4; }
.win.active > header { background: linear-gradient(#9ab4d3, #a6c0de 50%, #b9d1ea); color: #111; }
.doc { width: 18px; height: 18px; margin: 0 5px 0 0; }
h2 { flex: 1; margin: 0; font-size: 15px; font-weight: 400; line-height: 20px; }
.wbtns { display: flex; gap: 2px; }
.wbtns button { width: 42px; height: 24px; box-sizing: border-box; border: 1px solid #8697ad; border-radius: 2px; background: rgba(190, 206, 226, .5); display: grid; place-items: center; }
.wbtns svg { fill: #fbfcfd; stroke: #5c6470; stroke-width: 1.500; }
.active .wbtns button { border-color: #64809f; background: linear-gradient(#c3d5ea 50%, #9db7d4 50%, #b4cce6); box-shadow: inset 0 0 0 1px #d3e2f2; }
.active .wbtns button.x { border-color: #6b1f16; background: linear-gradient(#e09c8f 50%, #c0432c 50%, #d2674f); box-shadow: inset 0 0 0 1px #e8b3a8; }

.client { display: grid; grid-template: 404px 23px / minmax(0, 1fr) 63px; overflow: hidden; padding: 2px 0 0 3px; border: 1px solid #fff; border-top-color: #777; border-left-color: #777; background: #000; color: #fff; font: 12px/14px "DejaVu Sans Condensed", "Noto Sans", sans-serif; }
.plotwrap { position: relative; }
.plot { display: block; width: 100%; height: 404px; }
.plot path { fill: none; stroke-width: 1; }
.plot .grid { stroke: #84909c; stroke-dasharray: 3 3; }
.plot .level { stroke: #8f9aa5; }
.plot .bars { stroke: #32d632; }
.plot .frame { stroke: #fff; }
.quote { position: absolute; left: 4px; top: 4px; margin: 0; display: flex; gap: 8px; align-items: center; }
.quote i { border: 5px solid transparent; border-top-color: #fff; border-bottom: 0; margin-right: -3px; }
.scale { position: relative; padding-top: 17px; height: 404px; box-sizing: border-box; }
.scale li { position: relative; height: 49px; line-height: 49px; padding-left: 6px; }
.scale li::before { content: ""; position: absolute; left: 0; top: 24px; width: 3px; border-top: 1px solid #fff; }
.scale output { position: absolute; left: 1px; width: 56px; height: 14px; box-sizing: border-box; padding-left: 5px; background: #fff; color: #000; }
.dates { grid-column: 1; display: flex; padding-left: 1px; }
.dates li { position: relative; flex: 0 0 11.034%; line-height: 21px; white-space: nowrap; text-indent: -1px; }
.dates li::before { content: ""; position: absolute; left: 0; top: 0; height: 3px; border-left: 1px solid #fff; }
</style>
